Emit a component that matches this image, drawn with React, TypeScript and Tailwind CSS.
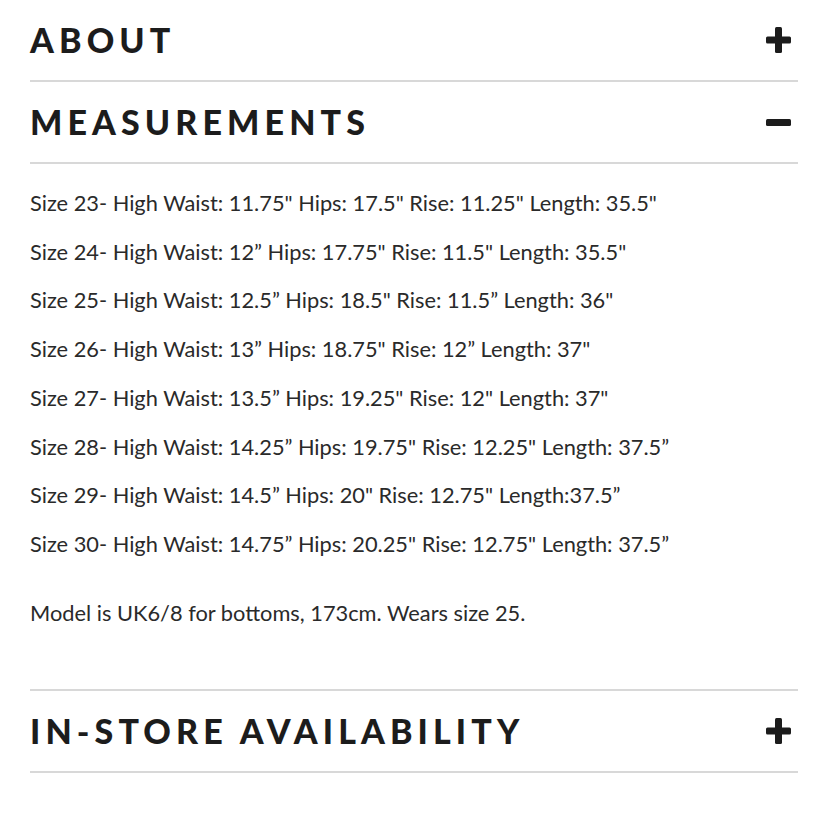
import React from "react"

const rows = [
  'Size 23- High Waist: 11.75" Hips: 17.5" Rise: 11.25" Length: 35.5"',
  'Size 24- High Waist: 12” Hips: 17.75" Rise: 11.5" Length: 35.5"',
  'Size 25- High Waist: 12.5” Hips: 18.5" Rise: 11.5” Length: 36"',
  'Size 26- High Waist: 13” Hips: 18.75" Rise: 12” Length: 37"',
  'Size 27- High Waist: 13.5” Hips: 19.25" Rise: 12" Length: 37"',
  'Size 28- High Waist: 14.25” Hips: 19.75" Rise: 12.25" Length: 37.5”',
  'Size 29- High Waist: 14.5” Hips: 20" Rise: 12.75" Length:37.5”',
  'Size 30- High Waist: 14.75” Hips: 20.25" Rise: 12.75" Length: 37.5”',
]

function PlusIcon() {
  return (
    <svg width="25" height="26" viewBox="0 0 25 26" className="text-[#1c1c1c]">
      <rect x="0" y="9.5" width="25" height="7" rx="1.5" fill="currentColor" />
      <rect x="9" y="0" width="7" height="26" rx="1.5" fill="currentColor" />
    </svg>
  )
}

function MinusIcon() {
  return (
    <svg width="25" height="7" viewBox="0 0 25 7" className="text-[#1c1c1c]">
      <rect x="0" y="0" width="25" height="7" rx="1.5" fill="currentColor" />
    </svg>
  )
}

function Header({ title, open }: { title: string; open?: boolean }) {
  return (
    <div className="flex h-[82px] items-center justify-between border-b-2 border-[#d8d8d8]">
      <h2 className="font-['Lato',sans-serif] text-[34px] leading-none font-black tracking-[0.15em] text-[#1c1c1c]">
        {title}
      </h2>
      <div className="pr-[7px]">{open ? <MinusIcon /> : <PlusIcon />}</div>
    </div>
  )
}

export default function App() {
  return (
    <div className="min-h-[828px] w-[828px] bg-white px-[30px]">
      <Header title="ABOUT" />
      <Header title="MEASUREMENTS" open />
      <div className="border-b-2 border-[#d8d8d8] pt-[15px] pb-[52px] font-['Lato',sans-serif] text-[21.8px] text-[#2a2a2a]">
        {rows.map((r) => (
          <p key={r} className="leading-[48.7px]">{r}</p>
        ))}
        <p className="mt-[20px] leading-[48.7px]">Model is UK6/8 for bottoms, 173cm. Wears size 25.</p>
      </div>
      <Header title="IN-STORE AVAILABILITY" />
    </div>
  )
}
